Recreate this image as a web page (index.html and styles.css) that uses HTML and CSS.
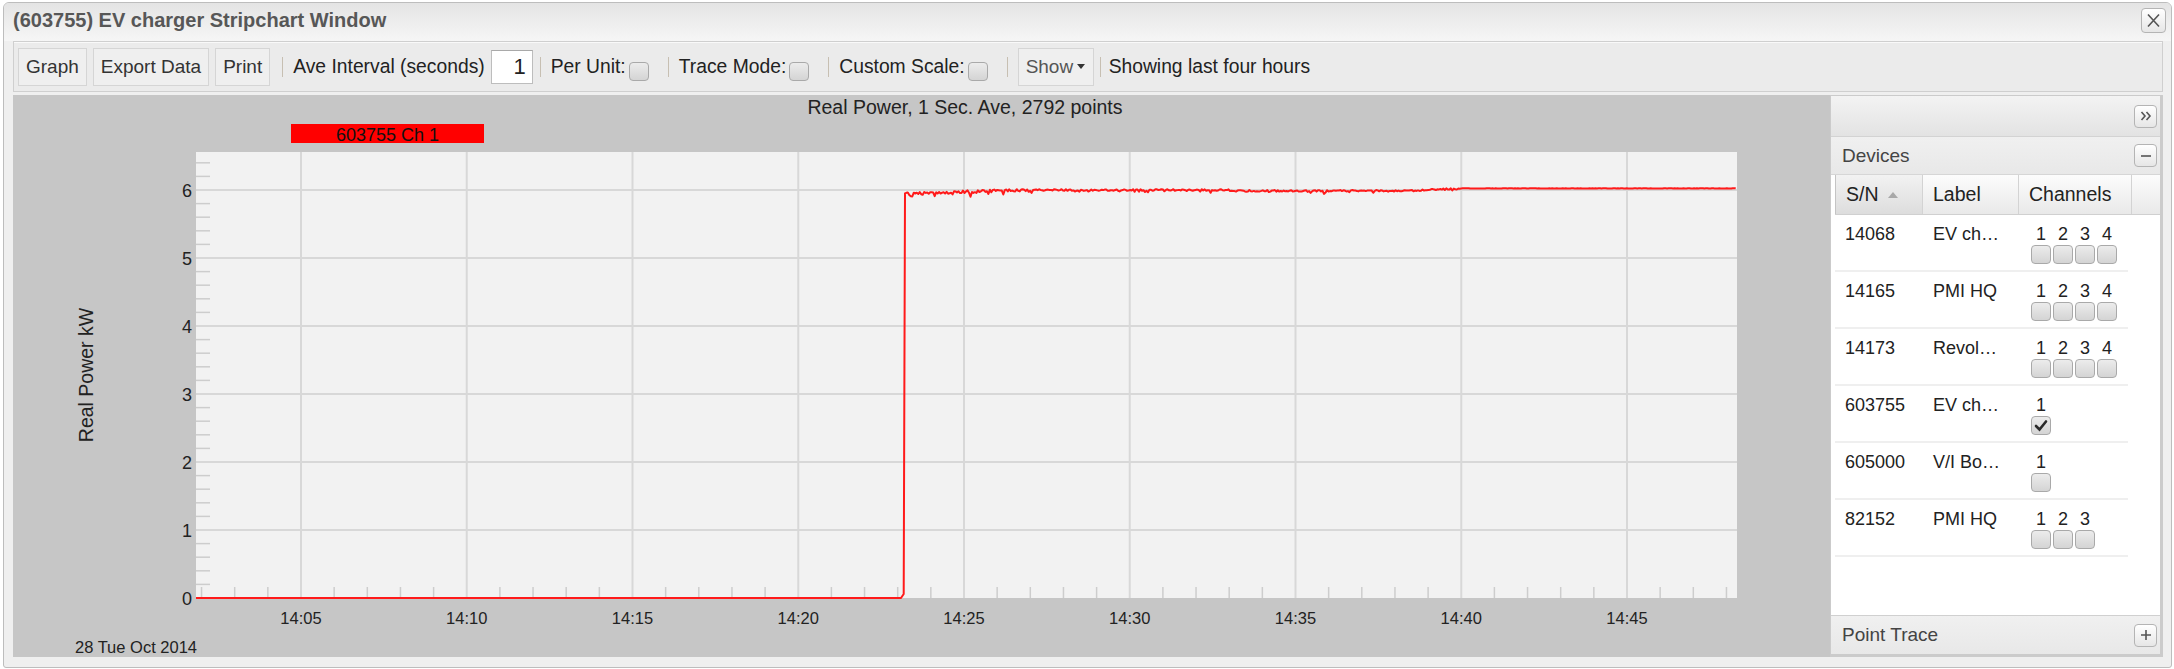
FILE: index.html
```html
<!DOCTYPE html>
<html lang="en">
  <head>
    <meta charset="UTF-8" />
    <title>(603755) EV charger Stripchart Window</title>
    <link rel="stylesheet" href="styles.css">
  </head>
  <body>
    <div class="window">
      <div class="window-title">
        <span class="title-text">(603755) EV charger Stripchart Window</span>
        <button class="tool close-tool" title="Close">
          <svg width="25" height="25" viewBox="0 0 25 25"><path d="M7 6.5 L18 18.5 M18 6.5 L7 18.5" /></svg>
        </button>
      </div>

      <!-- toolbar -->
      <div class="toolbar">
        <button class="tb-btn">Graph</button>
        <button class="tb-btn">Export Data</button>
        <button class="tb-btn last">Print</button>
        <span class="sep"></span>
        <label class="tb-field">Ave Interval (seconds)<input class="tb-input" type="text" value="1" /></label>
        <span class="sep"></span>
        <label class="tb-field check-field">Per Unit:<span class="check"></span></label>
        <span class="sep"></span>
        <label class="tb-field check-field">Trace Mode:<span class="check"></span></label>
        <span class="sep"></span>
        <label class="tb-field check-field">Custom Scale:<span class="check"></span></label>
        <span class="sep"></span>
        <button class="tb-btn tb-menu">Show<svg class="caret" width="8" height="5" viewBox="0 0 8 5"><path d="M0 0 H8 L4 5 Z" /></svg></button>
        <span class="sep"></span>
        <span class="tb-text">Showing last four hours</span>
      </div>

      <div class="content">
        <!-- chart -->
        <div class="chart">
          <svg id="chart" width="1817" height="562"></svg>
        </div>

        <!-- devices panel -->
        <div class="side">
          <div class="side-head">
            <button class="tool">
              <svg width="22" height="22" viewBox="0 0 22 22"><path d="M6.5 7 L10 11 L6.5 15 M11.5 7 L15 11 L11.5 15" /></svg>
            </button>
          </div>
          <div class="section-head">
            <span>Devices</span>
            <button class="tool">
              <svg width="22" height="22" viewBox="0 0 22 22"><path d="M6 11 H16" /></svg>
            </button>
          </div>
          <div class="grid-header">
            <div class="col col-sn sorted">S/N<svg class="sort" width="10" height="6" viewBox="0 0 10 6"><path d="M0 6 L5 0 L10 6 Z" /></svg></div>
            <div class="col col-label">Label</div>
            <div class="col col-ch">Channels</div>
            <div class="col col-fill"></div>
          </div>
          <div class="grid-body">
            <div class="row">
              <div class="cell col-sn">14068</div>
              <div class="cell col-label" title="EV charger">EV ch…</div>
              <div class="cell col-ch">
                <span class="chan"><b>1</b><i class="check"></i></span><span class="chan"><b>2</b><i class="check"></i></span><span class="chan"><b>3</b><i class="check"></i></span><span class="chan"><b>4</b><i class="check"></i></span>
              </div>
            </div>
            <div class="row">
              <div class="cell col-sn">14165</div>
              <div class="cell col-label">PMI HQ</div>
              <div class="cell col-ch">
                <span class="chan"><b>1</b><i class="check"></i></span><span class="chan"><b>2</b><i class="check"></i></span><span class="chan"><b>3</b><i class="check"></i></span><span class="chan"><b>4</b><i class="check"></i></span>
              </div>
            </div>
            <div class="row">
              <div class="cell col-sn">14173</div>
              <div class="cell col-label" title="Revolution">Revol…</div>
              <div class="cell col-ch">
                <span class="chan"><b>1</b><i class="check"></i></span><span class="chan"><b>2</b><i class="check"></i></span><span class="chan"><b>3</b><i class="check"></i></span><span class="chan"><b>4</b><i class="check"></i></span>
              </div>
            </div>
            <div class="row">
              <div class="cell col-sn">603755</div>
              <div class="cell col-label" title="EV charger">EV ch…</div>
              <div class="cell col-ch">
                <span class="chan"><b>1</b><i class="check checked"><svg width="18" height="17" viewBox="0 0 18 17"><path d="M4 9 L7.5 12.5 L14 4.5" /></svg></i></span>
              </div>
            </div>
            <div class="row">
              <div class="cell col-sn">605000</div>
              <div class="cell col-label" title="V/I Board">V/I Bo…</div>
              <div class="cell col-ch">
                <span class="chan"><b>1</b><i class="check"></i></span>
              </div>
            </div>
            <div class="row">
              <div class="cell col-sn">82152</div>
              <div class="cell col-label">PMI HQ</div>
              <div class="cell col-ch">
                <span class="chan"><b>1</b><i class="check"></i></span><span class="chan"><b>2</b><i class="check"></i></span><span class="chan"><b>3</b><i class="check"></i></span>
              </div>
            </div>
          </div>
          <div class="section-head trace-head">
            <span>Point Trace</span>
            <button class="tool">
              <svg width="22" height="22" viewBox="0 0 22 22"><path d="M6 11 H16 M11 6 V16" /></svg>
            </button>
          </div>
        </div>
      </div>
    </div>

    <script src="script.js"></script>
  </body>
</html>
```

FILE: styles.css
```css
body {
  margin: 0;
  background-color: #fff;
  font-family: "Liberation Sans", Arial, sans-serif;
  color: #222;
}

button {
  font-family: inherit;
  cursor: pointer;
}

.window {
  box-sizing: border-box;
  height: 666px;
  margin: 2px 2px 0 3px;
  border: 1px solid #bdbdbd;
  border-radius: 6px 6px 3px 3px;
  background-color: #efefef;
}

.window-title {
  display: flex;
  align-items: center;
  justify-content: space-between;
  height: 34px;
  padding: 0 5px 4px 9px;
  border-radius: 5px 5px 0 0;
  background: linear-gradient(#e4e4e4, #f6f6f6);
}

.title-text {
  font-size: 20px;
  font-weight: bold;
  color: #575757;
}

/* small tool buttons */
.tool {
  display: flex;
  align-items: center;
  justify-content: center;
  width: 23px;
  height: 23px;
  padding: 0;
  border: 1px solid #b4b4b4;
  border-radius: 4px;
  background: linear-gradient(#ffffff, #e6e6e6);
}

.tool svg {
  flex: none;
  fill: none;
  stroke: #555;
  stroke-width: 1.6;
}

.close-tool {
  width: 25px;
  height: 25px;
}

/* toolbar */
.toolbar {
  display: flex;
  align-items: center;
  box-sizing: border-box;
  height: 51px;
  margin: 0 8px 0 9px;
  padding-left: 4px;
  border: 1px solid #cfcfcf;
  background-color: #ebebeb;
  box-shadow: inset 0 1px #f9f9f9;
  font-size: 19.3px;
}

.tb-btn {
  height: 38px;
  margin-right: 6px;
  padding: 0 7px;
  border: 1px solid #d5d5d5;
  background-color: #efefef;
  font-size: 19px;
  color: #333;
}

.tb-btn.last {
  margin-right: 5px;
}

.tb-menu {
  display: flex;
  align-items: center;
  gap: 4px;
  width: 76px;
  margin-right: 0;
  padding: 0 7px;
  color: #555;
}

.tb-menu + .sep {
  margin: 0 8px 0 6px;
}

.caret {
  fill: #333;
}

.sep {
  width: 1px;
  height: 20px;
  margin: 0 10px 0 7px;
  background-color: #c7bfb2;
}

.tb-field {
  display: flex;
  align-items: center;
  color: #222;
}

.tb-input {
  box-sizing: border-box;
  width: 42px;
  height: 34px;
  margin-left: 6px;
  padding: 0 6px 0 0;
  border: 1px solid #bdbdbd;
  border-top-color: #a9a9a9;
  font-family: inherit;
  font-size: 22px;
  text-align: right;
  color: #222;
}

.check-field {
  gap: 3px;
  margin-right: 12px;
}

.check {
  display: inline-flex;
  align-items: center;
  justify-content: center;
  box-sizing: border-box;
  width: 20px;
  height: 19px;
  border: 1px solid #a9a9a9;
  border-radius: 4px;
  background: linear-gradient(#ececec, #d4d4d4);
}

.check-field .check {
  margin-top: 10px;
}

.tb-text {
  color: #222;
}

/* content area */
.content {
  display: flex;
  height: 562px;
  margin: 3px 8px 0 9px;
}

.chart {
  width: 1817px;
  flex: none;
  background-color: #c6c6c6;
}

#chart {
  display: block;
}

#chart text {
  font-family: "Liberation Sans", Arial, sans-serif;
  fill: #222;
}

#chart .plot-bg {
  fill: #f2f2f2;
}

#chart .grid {
  stroke: #d8d8d8;
  stroke-width: 2;
}

#chart .tick {
  stroke: #cdcdcd;
  stroke-width: 1.5;
}

#chart .y-label {
  font-size: 18px;
  text-anchor: end;
}

#chart .x-label {
  font-size: 16.5px;
  text-anchor: middle;
}

#chart .date-label {
  font-size: 16.5px;
}

#chart .chart-title {
  font-size: 19.5px;
  text-anchor: middle;
}

#chart .axis-title {
  font-size: 19.5px;
  text-anchor: middle;
}

#chart .legend-box {
  fill: #ff0000;
}

#chart .legend-text {
  font-size: 18px;
  text-anchor: middle;
  fill: #111;
}

#chart .trace {
  fill: none;
  stroke: #ff1a1a;
  stroke-width: 2;
  stroke-linejoin: round;
}

/* devices panel */
.side {
  display: flex;
  flex-direction: column;
  box-sizing: border-box;
  width: 333px;
  border: solid #cbcbcb;
  border-width: 1px 3px 3px 1px;
  background-color: #fff;
}

.side-head {
  display: flex;
  align-items: center;
  justify-content: flex-end;
  box-sizing: border-box;
  height: 41px;
  padding-right: 3px;
  border-bottom: 1px solid #d3d3d3;
  background: linear-gradient(#f3f3f3, #e3e3e3);
}

.section-head {
  display: flex;
  align-items: center;
  justify-content: space-between;
  box-sizing: border-box;
  height: 38px;
  padding: 0 3px 0 11px;
  border-bottom: 1px solid #d6d6d6;
  background: linear-gradient(#f0f0f0, #e8e8e8);
  font-size: 19px;
  color: #444;
}

.trace-head {
  height: 39px;
  border-top: 1px solid #d0d0d0;
  border-bottom: none;
}

.grid-header {
  display: flex;
  box-sizing: border-box;
  height: 40px;
  margin-left: 4px;
  border-bottom: 1px solid #d0d0d0;
  background: linear-gradient(#fcfcfc, #e9e9e9);
  font-size: 19.5px;
  color: #222;
}

.grid-header .col {
  display: flex;
  align-items: center;
  gap: 9px;
  box-sizing: border-box;
  padding-left: 10px;
  border-right: 1px solid #d3d3d3;
}

.grid-header .sorted {
  border-left: 1px solid #c4c4c4;
  background: linear-gradient(#f2f2f2, #dddddd);
}

.sort {
  fill: #a8a8a8;
}

.col-sn {
  width: 88px;
}

.col-label {
  width: 96px;
}

.grid-header .col-ch {
  width: 113px;
}

.grid-header .col-fill {
  flex: 1;
  border-right: none;
}

.grid-body {
  flex: 1;
  background-color: #fff;
}

.row {
  display: flex;
  width: 293px;
  height: 57px;
  box-sizing: border-box;
  margin-left: 4px;
  border-bottom: 2px solid #efefef;
  font-size: 18px;
  color: #222;
}

.cell {
  box-sizing: border-box;
  padding: 9px 10px 0;
  line-height: 20px;
  white-space: nowrap;
}

.cell.col-ch {
  width: 109px;
  padding-left: 11px;
}

.chan {
  display: inline-flex;
  flex-direction: column;
  align-items: center;
  width: 22px;
}

.chan b {
  font-weight: normal;
  line-height: 20px;
}

.chan .check {
  margin-top: 1px;
}

.check svg {
  fill: none;
  stroke: #2a2a2a;
  stroke-width: 2.6;
  stroke-linecap: round;
}
```

FILE: script.js
```js
// stripchart: real power for 603755 Ch 1
const NS = "http://www.w3.org/2000/svg";
const svg = document.querySelector("#chart");

const plot = { left: 183, right: 1724, top: 57, bottom: 503 };
const pxPerMin = 33.15;
const pxPerKw = 68;

function xOf(min) {
  return 288 + (min - 5) * pxPerMin;
}

function yOf(kw) {
  return plot.bottom - kw * pxPerKw;
}

function add(tag, attrs, text) {
  const el = document.createElementNS(NS, tag);
  for (const key in attrs) el.setAttribute(key, attrs[key]);
  if (text !== undefined) el.textContent = text;
  svg.appendChild(el);
  return el;
}

// plot background
add("rect", {
  class: "plot-bg",
  x: plot.left,
  y: plot.top,
  width: plot.right - plot.left,
  height: plot.bottom - plot.top,
});

// minor ticks
for (let i = 1; i <= 32; i++) {
  if (i % 5 === 0) continue;
  const y = yOf(i * 0.2);
  add("line", { class: "tick", x1: plot.left, x2: plot.left + 14, y1: y, y2: y });
}
for (let m = 2; m <= 48; m++) {
  if (m % 5 === 0) continue;
  const x = xOf(m);
  add("line", { class: "tick", x1: x, x2: x, y1: plot.bottom - 11, y2: plot.bottom });
}

// grid lines
for (let kw = 1; kw <= 6; kw++) {
  const y = yOf(kw);
  add("line", { class: "grid", x1: plot.left, x2: plot.right, y1: y, y2: y });
}
for (let m = 5; m <= 45; m += 5) {
  const x = xOf(m);
  add("line", { class: "grid", x1: x, x2: x, y1: plot.top, y2: plot.bottom });
}

// axis labels
for (let kw = 0; kw <= 6; kw++) {
  add("text", { class: "y-label", x: 179, y: yOf(kw) + 6.5 }, String(kw));
}
for (let m = 5; m <= 45; m += 5) {
  const label = "14:" + String(m).padStart(2, "0");
  add("text", { class: "x-label", x: xOf(m), y: 529 }, label);
}
add("text", { class: "date-label", x: 62, y: 558 }, "28 Tue Oct 2014");
add("text", { class: "chart-title", x: 952, y: 19 }, "Real Power, 1 Sec. Ave, 2792 points");
add("text", { class: "axis-title", transform: "translate(80 280) rotate(-90)" }, "Real Power kW");

// legend
add("rect", { class: "legend-box", x: 278, y: 29, width: 193, height: 19 });
add("text", { class: "legend-text", x: 374.5, y: 45.5 }, "603755 Ch 1");

// trace data (seeded so it draws the same every time)
function rng(seed) {
  return function () {
    seed = (seed + 0x6d2b79f5) | 0;
    let t = Math.imul(seed ^ (seed >>> 15), 1 | seed);
    t = (t + Math.imul(t ^ (t >>> 7), 61 | t)) ^ t;
    return ((t ^ (t >>> 14)) >>> 0) / 4294967296;
  };
}
const rand = rng(603755);

function level(m) {
  if (m < 24.5) return 5.94 + (m - 23.22) * 0.02;
  if (m < 27) return 5.965 + ((m - 24.5) / 2.5) * 0.035;
  if (m < 33) return 6.0;
  if (m < 38.5) return 5.988;
  if (m < 40) return 5.988 + ((m - 38.5) / 1.5) * 0.035;
  return 6.024;
}

function noise(m) {
  const amp = m < 27 ? 0.045 : m < 40 ? 0.025 : 0.006;
  let n = (rand() - 0.5) * amp;
  if (m < 40 && rand() < 0.15) n -= rand() * amp * 1.5;
  return n;
}

const endMin = 5 + (plot.right - 288) / pxPerMin;
const pts = [
  [plot.left, plot.bottom],
  [xOf(23.1), plot.bottom],
  [xOf(23.18), plot.bottom - 4],
  [xOf(23.22), yOf(5.95)],
];
for (let m = 23.26; m <= endMin; m += 0.045) {
  pts.push([xOf(m), yOf(level(m) + noise(m))]);
}

const d = pts.map((p, i) => (i ? "L" : "M") + p[0].toFixed(1) + " " + p[1].toFixed(1)).join(" ");
add("path", { class: "trace", d: d });
```
